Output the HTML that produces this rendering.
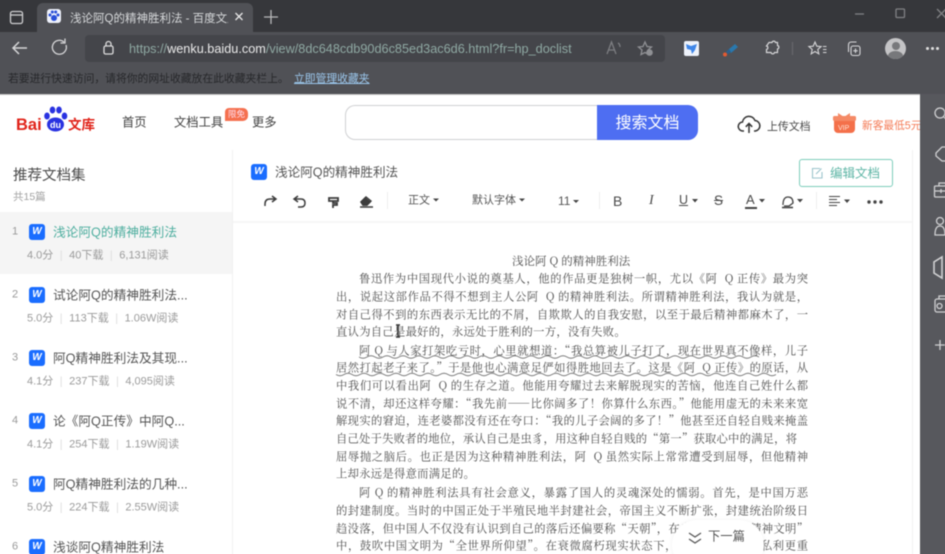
<!DOCTYPE html>
<html lang="zh"><head><meta charset="utf-8"><title>浅论阿Q的精神胜利法</title>
<style>
html,body{margin:0;padding:0;width:945px;height:554px;overflow:hidden;background:#505156}
body{font-family:"Liberation Sans","Noto Sans CJK SC",sans-serif}
#o{position:absolute;left:0;top:0;width:945px;height:554px;overflow:hidden}
#w{position:absolute;left:-10px;top:-10px;width:975px;height:584px;overflow:hidden;background:#505156;filter:blur(.4px)}
#i{position:absolute;left:10px;top:10px;width:945px;height:554px}
.a,.a *{box-sizing:border-box}
.a{position:absolute;white-space:nowrap;line-height:1}
.c{transform:translateY(calc(-50% + 1px))}
svg{position:absolute;overflow:visible;fill:none}
.l{position:absolute;left:336px;width:472px;height:18px;line-height:18px;font-size:11.3px;font-family:"Noto Serif CJK SC","Liberation Serif",serif;color:#505050;text-align:justify;text-align-last:justify;white-space:nowrap;filter:blur(.25px);transform:translateY(.5px)}
.n{text-align-last:left}
.num{position:absolute;left:12px;font-size:11px;color:#9a9a9a;transform:translateY(calc(-50% + 1px));line-height:1}
.ic{position:absolute;left:29px;width:16px;height:16px;border-radius:3px;background:#1a6dff;color:#fff;font:italic bold 10px/16px "Liberation Sans",sans-serif;text-align:center}
.tt{position:absolute;left:53px;font-size:12.7px;color:#555;transform:translateY(calc(-50% + 1px));line-height:1;white-space:nowrap}
.m{position:absolute;left:27px;font-size:11px;color:#9b9b9b;transform:translateY(calc(-50% + 1px));line-height:1;white-space:nowrap}
.m i{font-style:normal;color:#ddd;margin:0 6.5px}
.tb{position:absolute;font-size:11px;color:#555;transform:translateY(calc(-50% + 1px));line-height:1;white-space:nowrap}
.tb::after{content:"";display:inline-block;border:3px solid transparent;border-top:3.5px solid #444;border-bottom:0;margin-left:3px;vertical-align:2px}
</style></head><body>
<div id="o"><div id="w"><div id="i">

<!-- browser chrome -->
<div class="a" style="left:-10px;top:-10px;width:975px;height:42px;background:#36373b"></div>
<div class="a" style="left:37px;top:3px;width:216px;height:29px;background:#505156;border-radius:6px 6px 0 0"></div>
<div class="a" style="left:85px;top:35px;width:580px;height:27px;background:#44454a;border-radius:4px"></div>
<svg style="left:0;top:0" width="945" height="95" stroke="#cfcfd1" stroke-width="1.3">
<rect x="10.5" y="11.5" width="12" height="12" rx="2"/><path d="M11 15h11"/>
<path d="M264 17h14M271 10v14" stroke="#b8b8ba"/>
<path d="M235.500 13l7 7M242.500 13l-7 7" stroke="#e8e8e8"/>
<path d="M855 14h9" stroke="#808184"/>
<rect x="896" y="9" width="8.500" height="8.500" rx="1" stroke="#808184"/>
<path d="M937 9l9 9M946 9l-9 9" stroke="#808184"/>
<path d="M27 48H13M19 42l-6 6 6 6" stroke="#d6d6d8" stroke-width="1.500"/>
<path d="M66 45a7 7 0 1 1-2-3M65 38.500v4.500h-4.500" stroke="#d6d6d8" stroke-width="1.300"/>
<rect x="104" y="46" width="9" height="8" rx="1.500" stroke="#dcdcdc"/><path d="M106 46v-2a2.500 2.500 0 0 1 5 0v2" stroke="#dcdcdc"/>
<path d="M607 54l4.500-12 4.500 12M608.500 50h6M618 43q2 1 2 4" stroke="#7d7e82" stroke-width="1.300"/>
<path d="M645 42l2 4.500 4.500.5-3.500 3 1 4.500-4-2-4 2 1-4.500-3.500-3 4.500-.5z" stroke="#8f9094"/>
<circle cx="649.500" cy="52.500" r="3.300" fill="#8f9094" stroke="none"/>
<path d="M794 42.500h3a1.800 1.800 0 0 1 3.500 0h2v3a1.800 1.800 0 0 1 0 3.500v3.500h-3a1.800 1.800 0 0 1-3.500 0h-4.500v-3a1.800 1.800 0 0 0 0-3.500z" transform="translate(-25 0)" stroke="#d7d7d9" stroke-width="1.200"/>
<path d="M792.500 42v13" stroke="#66676b"/>
<path d="M815 42l1.800 4.200 4.300.4-3.300 2.900 1 4.300-3.800-2.300-3.800 2.300 1-4.300-3.300-2.900 4.300-.4zM823 46.500h3.500M823 49.500h3.500M823 52.500h3.500" stroke="#d7d7d9" stroke-width="1.100"/>
<rect x="851" y="46" width="9" height="9.500" rx="2" stroke="#d7d7d9" stroke-width="1.100"/>
<path d="M848.500 52v-7q0-3 3-3h5M855.500 48.500v4.500M853.300 50.800h4.400" stroke="#d7d7d9" stroke-width="1.100"/>
</svg>
<div class="a" style="left:47px;top:9px;width:14px;height:14px;border-radius:3px;background:#eef1fb"></div>
<svg style="left:47px;top:9px" width="14" height="14"><circle cx="7" cy="9" r="3" fill="#2a50d8"/><circle cx="3" cy="6" r="1.500" fill="#2a50d8"/><circle cx="11" cy="6" r="1.500" fill="#2a50d8"/><circle cx="5.300" cy="3" r="1.500" fill="#2a50d8"/><circle cx="8.700" cy="3" r="1.500" fill="#2a50d8"/></svg>
<div class="a c" style="left:70px;top:18px;width:158px;overflow:hidden;font-size:11.500px;line-height:14px;color:#d6d8da">浅论阿Q的精神胜利法 - 百度文库</div>
<div class="a c" style="left:129px;top:48px;font-size:12.700px;line-height:16px;color:#8fa9a3">https://<span style="color:#eaeaea">wenku.baidu.com</span>/view/8dc648cdb90d6c85ed3ac6d6.html?fr=hp_doclist</div>

<div class="a" style="left:684px;top:41px;width:15px;height:15px;background:#eef2fa;border-radius:2px"></div>
<svg style="left:684px;top:41px" width="15" height="15"><path d="M2 3l5 2 6-2-2 6-3 4-1-4-4-1z" fill="#3f86e8"/></svg>
<svg style="left:722px;top:41px" width="18" height="16"><path d="M6 9l7-6 3 3-7 6z" fill="#2a78ad"/><circle cx="3" cy="13.500" r="2" fill="#e25a32"/><path d="M4 11l3-3 2 3-3 2z" fill="#2a5f8d"/></svg>
<div class="a" style="left:885px;top:38px;width:21px;height:21px;border-radius:50%;background:#c4c4c6;overflow:hidden"><div style="position:absolute;left:6.500px;top:4px;width:8px;height:8px;border-radius:50%;background:#77787b"></div><div style="position:absolute;left:3px;top:13px;width:15px;height:10px;border-radius:50%;background:#77787b"></div></div>
<div class="a" style="left:931px;top:47px;width:3px;height:3px;border-radius:50%;background:#e0e0e0;box-shadow:5px 0 #e0e0e0,-5px 0 #e0e0e0"></div>

<div class="a c" style="left:8px;top:78px;font-size:10.800px;line-height:14px;color:#26272a">若要进行快速访问，请将你的网址收藏放在此收藏夹栏上。</div>
<div class="a c" style="left:294px;top:78px;font-size:10.800px;line-height:14px;color:#9cc8ee;text-decoration:underline">立即管理收藏夹</div>

<!-- page -->
<div class="a" style="left:-10px;top:94px;width:930px;height:480px;background:#fff;border-top:1.500px solid #c4c4c4"></div>

<!-- side panel -->
<div class="a" style="left:920px;top:94px;width:45px;height:480px;background:#57585d"></div>
<svg style="left:920px;top:94px" width="25" height="260" stroke="#d0d0d2" stroke-width="1.300">
<circle cx="20" cy="19" r="5"/><path d="M24 23l3 3"/>
<path d="M16 59l6-6h8v14h-8l-6-5z"/>
<g transform="translate(0 26)"><rect x="14.500" y="66" width="16" height="11" rx="1"/><path d="M19 66v-3h7v3M14.500 71h16M21 69v4"/></g>
<g transform="translate(0 25)"><circle cx="20" cy="102" r="3.500"/><path d="M15 116q0-9 5-9t5 9z"/><path d="M27 100q2 4 0 8"/></g>
<g transform="translate(0 25)"><path d="M14 143v11l8 5v-21z" stroke-width="1.600"/></g>
<g transform="translate(0 25)"><rect x="15" y="180" width="16" height="13" rx="2"/><circle cx="19.500" cy="187" r="2.500"/><path d="M19 180v-3h10"/></g>
<path d="M20 246v10M15 251h10"/>
</svg>

<!-- logo -->
<div class="a c" style="left:16px;top:124px;font:bold 16.500px/18px 'Liberation Sans',sans-serif;color:#e1251b">Bai</div>
<svg style="left:43px;top:105px" width="26" height="30"><g fill="#2932e1"><ellipse cx="4" cy="11" rx="2.800" ry="3.500"/><ellipse cx="9.500" cy="5" rx="2.800" ry="3.500"/><ellipse cx="16" cy="5" rx="2.800" ry="3.500"/><ellipse cx="21.500" cy="11" rx="2.800" ry="3.500"/><ellipse cx="12.500" cy="19.500" rx="8.500" ry="7"/></g></svg>
<div class="a c" style="left:50px;top:124px;font:bold 9px/10px 'Liberation Sans',sans-serif;color:#fff">du</div>
<div class="a c" style="left:68px;top:124px;font:bold 13.500px/15px 'Liberation Sans','Noto Sans CJK SC',sans-serif;color:#e1251b">文库</div>

<div class="a c" style="left:122px;top:122px;font-size:12.300px;line-height:15px;color:#444">首页</div>
<div class="a c" style="left:174px;top:122px;font-size:12.300px;line-height:15px;color:#444">文档工具</div>
<div class="a c" style="left:252px;top:122px;font-size:12.300px;line-height:15px;color:#444">更多</div>
<div class="a" style="left:225px;top:108px;width:23px;height:13px;background:#f5704f;border-radius:4px 5px 5px 0;color:#fde;font-size:8.500px;line-height:13px;text-align:center">限免</div>

<!-- search -->
<div class="a" style="left:345px;top:105px;width:260px;height:35px;border:1.500px solid #cfd0d2;border-right:0;border-radius:10px 0 0 10px;background:#fff"></div>
<div class="a" style="left:597px;top:105px;width:101px;height:35px;line-height:37px;background:#4e6ef2;color:#fff;border-radius:0 10px 10px 0;text-align:center;font-size:16px">搜索文档</div>
<svg style="left:738px;top:115px" width="24" height="20" stroke="#333" stroke-width="1.500"><path d="M6 16H5a4.500 4.500 0 0 1-.5-9A6.500 6.500 0 0 1 17 5.500a5.300 5.300 0 0 1 .5 10.500H16"/><path d="M11 18v-9M7.800 11.800L11 8.500l3.200 3.300"/></svg>
<div class="a c" style="left:767px;top:126px;font-size:10.900px;line-height:14px;color:#4a4a4a">上传文档</div>
<svg style="left:833px;top:111px" width="24" height="24"><rect x="1" y="6" width="21" height="16" rx="4" fill="#f4704a"/><rect x="0" y="5" width="23" height="5" rx="1.500" fill="#f58a66"/><path d="M5 2l6 4 6-4v4H5z" fill="#f58a66"/></svg>
<div class="a" style="left:838px;top:125px;color:#ffe3d6;font:7px/8px 'Liberation Sans',sans-serif">VIP</div>
<div class="a c" style="left:862px;top:125px;width:58px;overflow:hidden;font-size:10.700px;line-height:14px;color:#f47a55">新客最低5元起</div>

<!-- sidebar -->
<div class="a c" style="left:13px;top:175px;font-size:14.500px;line-height:18px;color:#4c4c4c">推荐文档集</div>
<div class="a c" style="left:13px;top:196px;font-size:10.500px;line-height:14px;color:#a2a2a2">共15篇</div>
<div class="a" style="left:-10px;top:212px;width:242px;height:62px;background:#f5f5f5"></div>
<div class="a" style="left:232px;top:150px;width:1px;height:424px;background:#f1f1f1"></div>

<div class="num" style="top:231px">1</div><div class="ic" style="top:224px">W</div><div class="tt" style="top:232px;color:#4eae9f">浅论阿Q的精神胜利法</div>
<div class="m" style="top:255px">4.0分<i>|</i>40下载<i>|</i>6,131阅读</div>
<div class="num" style="top:294px">2</div><div class="ic" style="top:287px">W</div><div class="tt" style="top:295px">试论阿Q的精神胜利法...</div>
<div class="m" style="top:318px">5.0分<i>|</i>113下载<i>|</i>1.06W阅读</div>
<div class="num" style="top:357px">3</div><div class="ic" style="top:350px">W</div><div class="tt" style="top:358px">阿Q精神胜利法及其现...</div>
<div class="m" style="top:381px">4.1分<i>|</i>237下载<i>|</i>4,095阅读</div>
<div class="num" style="top:420px">4</div><div class="ic" style="top:413px">W</div><div class="tt" style="top:421px">论《阿Q正传》中阿Q...</div>
<div class="m" style="top:444px">4.1分<i>|</i>254下载<i>|</i>1.19W阅读</div>
<div class="num" style="top:483px">5</div><div class="ic" style="top:476px">W</div><div class="tt" style="top:484px">阿Q精神胜利法的几种...</div>
<div class="m" style="top:507px">5.0分<i>|</i>224下载<i>|</i>2.55W阅读</div>
<div class="num" style="top:546px">6</div><div class="ic" style="top:539px">W</div><div class="tt" style="top:547px">浅谈阿Q精神胜利法</div>

<!-- doc header -->
<div class="ic" style="left:251px;top:164px">W</div>
<div class="a c" style="left:275px;top:172px;font-size:12.600px;line-height:15px;color:#555">浅论阿Q的精神胜利法</div>
<div class="a" style="left:799px;top:159px;width:94px;height:28px;border:1.500px solid #7ccdbb;border-radius:3px"></div>
<svg style="left:811px;top:167px" width="12" height="12" stroke="#9cc4cc" stroke-width="1.100"><path d="M9 1.500H1.500v9.500h9.500V5M5 7l5.500-5.500"/></svg>
<div class="a c" style="left:830px;top:173px;font-size:12.500px;line-height:15px;color:#5db5a5">编辑文档</div>
<div class="a" style="left:233px;top:221px;width:680px;height:2px;background:#f6f6f6"></div>
<div class="a" style="left:912px;top:150px;width:1px;height:424px;background:#f2f2f2"></div>

<svg style="left:260px;top:192px" width="120" height="18" stroke="#3c3c3c" stroke-width="1.500">
<path d="M5 14v-2q0-5 5-5h5M12 4l4 3-4 3" />
<path d="M38 4l-4 3 4 3M34 7h7q4 0 4 4t-4 4h-3"/>
<path d="M69 6h9v3h-9zM73 9v2h4v2h-4v3" stroke-width="1.800"/>
<path d="M101 10l5-5 5 4-4 4h-4zM100 15h13" stroke-width="1.400"/><path d="M105 6l5 4-3 3h-4l-2-3z" fill="#3c3c3c"/>
</svg>
<div class="a" style="left:387px;top:192px;width:1px;height:17px;background:#eee"></div>
<div class="tb" style="left:408px;top:200px">正文</div>
<div class="tb" style="left:472px;top:200px">默认字体</div>
<div class="tb" style="left:558px;top:200px;font-size:12px">11</div>
<div class="a" style="left:599px;top:192px;width:1px;height:17px;background:#eee"></div>
<div class="a c" style="left:613px;top:200px;font:14px/16px 'Liberation Sans',sans-serif;color:#4a4a4a">B</div>
<div class="a c" style="left:649px;top:200px;font:italic 14px/16px 'Liberation Serif',serif;color:#4a4a4a">I</div>
<div class="a c" style="left:679px;top:199px;font:12.500px/16px 'Liberation Sans',sans-serif;color:#4a4a4a;text-decoration:underline">U</div>
<div class="a c" style="left:714px;top:200px;font:13.500px/16px 'Liberation Sans',sans-serif;color:#4a4a4a;text-decoration:line-through">S</div>
<div class="a c" style="left:746px;top:199px;font:13px/16px 'Liberation Sans',sans-serif;color:#4a4a4a">A</div>
<div class="a" style="left:745px;top:207px;width:12px;height:1.500px;background:#444"></div>
<svg style="left:690px;top:193px" width="130" height="16"><g fill="#444"><path d="M2 6h6l-3 3.500zM69 6h6l-3 3.500zM107 6h6l-3 3.500z"/></g>
<path d="M93 12q0-8 5-8t5 6l-4 3h-5" stroke="#444" stroke-width="1.300"/><path d="M92 14.500h11" stroke="#444" stroke-width="1.600"/></svg>
<div class="a" style="left:816px;top:192px;width:1px;height:17px;background:#eee"></div>
<svg style="left:828px;top:195px" width="66" height="12"><path d="M1 1.500h11M1 4.500h8M1 7.500h11M1 10.500h8" stroke="#444" stroke-width="1.100"/><path d="M16 4.500h6l-3 3.500z" fill="#444"/><circle cx="41" cy="7" r="1.700" fill="#444"/><circle cx="47" cy="7" r="1.700" fill="#444"/><circle cx="53" cy="7" r="1.700" fill="#444"/></svg>

<!-- doc body -->
<div class="a" style="left:512px;top:252.500px;font-family:'Noto Serif CJK SC','Liberation Serif',serif;font-size:11.500px;line-height:16px;color:#505050">浅论阿 Q 的精神胜利法</div>
<div class="l" style="top:269px;left:359px;width:449px">鲁迅作为中国现代小说的奠基人，他的作品更是独树一帜，尤以《阿&nbsp;&nbsp;Q 正传》最为突</div>
<div class="l" style="top:287px">出，说起这部作品不得不想到主人公阿&nbsp;&nbsp;Q 的精神胜利法。所谓精神胜利法，我认为就是，</div>
<div class="l" style="top:305px">对自己得不到的东西表示无比的不屑，自欺欺人的自我安慰，以至于最后精神都麻木了，一</div>
<div class="l n" style="top:322px;letter-spacing:.3px">直认为自己是最好的，永远处于胜利的一方，没有失败。</div>
<div class="l" style="top:341px;left:359px;width:449px">阿 Q 与人家打架吃亏时，心里就想道：“我总算被儿子打了，现在世界真不像样，儿子</div>
<div class="l" style="top:358px">居然打起老子来了。”于是他也心满意足俨如得胜地回去了。这是《阿&nbsp;&nbsp;Q 正传》的原话，从</div>
<div class="l" style="top:376px">中我们可以看出阿&nbsp;&nbsp;Q 的生存之道。他能用夸耀过去来解脱现实的苦恼，他连自己姓什么都</div>
<div class="l" style="top:394px">说不清，却还这样夸耀：“我先前——比你阔多了！你算什么东西。”他能用虚无的未来来宽</div>
<div class="l" style="top:411px">解现实的窘迫，连老婆都没有还在夸口：“我的儿子会阔的多了！”他甚至还自轻自贱来掩盖</div>
<div class="l" style="top:429px;width:461px">自己处于失败者的地位，承认自己是虫豸，用这种自轻自贱的“第一”获取心中的满足，将</div>
<div class="l" style="top:447px">屈辱抛之脑后。也正是因为这种精神胜利法，阿&nbsp;&nbsp;Q 虽然实际上常常遭受到屈辱，但他精神</div>
<div class="l n" style="top:464px;letter-spacing:.3px">上却永远是得意而满足的。</div>
<div class="l" style="top:483px;left:359px;width:449px">阿 Q 的精神胜利法具有社会意义，暴露了国人的灵魂深处的懦弱。首先，是中国万恶</div>
<div class="l" style="top:501px">的封建制度。当时的中国正处于半殖民地半封建社会，帝国主义不断扩张，封建统治阶级日</div>
<div class="l" style="top:519px">趋没落，但中国人不仅没有认识到自己的落后还偏要称“天朝”，在自我陶醉的“精神文明”</div>
<div class="l" style="top:536px">中，鼓吹中国文明为“全世界所仰望”。在衰微腐朽现实状态下，国人不思进取，私利更重</div>
<svg style="left:0;top:0" width="945" height="554" stroke="#777" stroke-width="1">
<path d="M359 357q4 2.500 8 0t8 0 8 0 8 0 8 0 8 0 8 0 8 0 8 0 8 0 8 0 8 0 8 0 8 0 8 0 8 0 8 0 8 0 8 0 8 0 8 0 8 0 8 0 8 0 8 0 8 0 8 0 8 0 8 0 8 0 8 0 8 0 8 0 8 0 8 0 8 0 8 0 8 0 8 0 8 0 8 0 8 0 8 0 8 0 8 0 8 0 8 0 8 0 8 0 8 0"/>
<path d="M336 374.500q4 2.500 8 0t8 0 8 0 8 0 8 0 8 0 8 0 8 0 8 0 8 0 8 0 8 0 8 0 8 0 8 0 8 0 8 0 8 0 8 0 8 0 8 0 8 0 8 0 8 0 8 0 8 0 8 0 8 0 8 0 8 0 8 0 8 0 8 0 8 0 8 0 8 0 8 0 8 0 8 0 8 0 8 0 8 0 8 0 8 0 8 0 8 0 8 0 8 0 8 0 8 0 8 0 8 0 8 0 8 0 8 0"/>
<path d="M396 325h4M396 337h4M398 325v12" stroke="#333" stroke-width="1.500"/>
</svg>

<!-- next pill -->
<div class="a" style="left:672px;top:520px;width:92px;height:50px;background:#fff;border-radius:25px;box-shadow:0 0 5px rgba(0,0,0,.06)"></div>
<svg style="left:688px;top:531px" width="14" height="14" stroke="#555" stroke-width="1.300"><path d="M1 2l6 4 6-4M1 8l6 4 6-4"/></svg>
<div class="a c" style="left:708px;top:536px;font-size:12.300px;line-height:15px;color:#555">下一篇</div>
</div></div></div>
</body></html>
